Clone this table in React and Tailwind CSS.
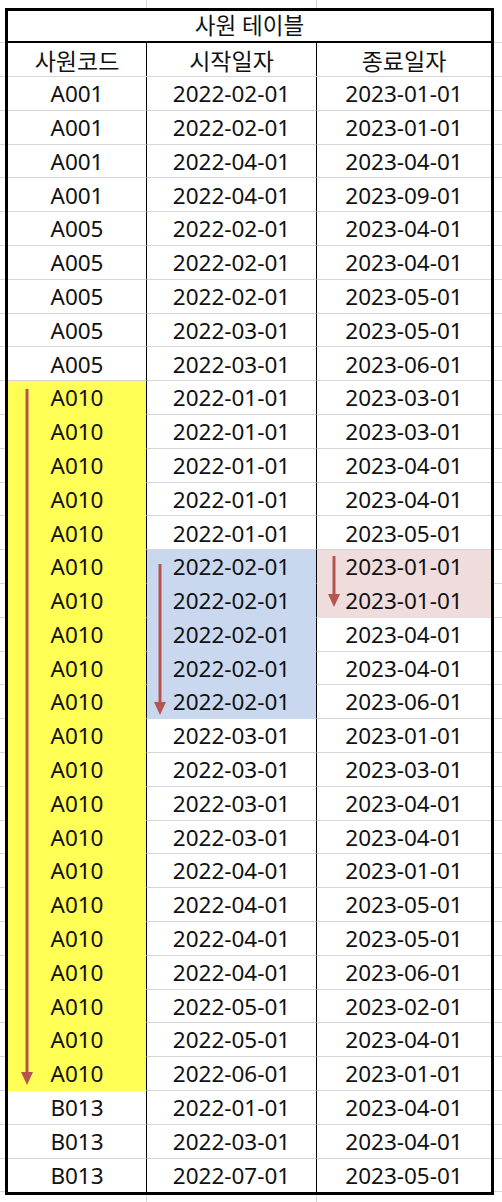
import React from 'react';

const rows = [
  ['A001', '2022-02-01', '2023-01-01'],
  ['A001', '2022-02-01', '2023-01-01'],
  ['A001', '2022-04-01', '2023-04-01'],
  ['A001', '2022-04-01', '2023-09-01'],
  ['A005', '2022-02-01', '2023-04-01'],
  ['A005', '2022-02-01', '2023-04-01'],
  ['A005', '2022-02-01', '2023-05-01'],
  ['A005', '2022-03-01', '2023-05-01'],
  ['A005', '2022-03-01', '2023-06-01'],
  ['A010', '2022-01-01', '2023-03-01'],
  ['A010', '2022-01-01', '2023-03-01'],
  ['A010', '2022-01-01', '2023-04-01'],
  ['A010', '2022-01-01', '2023-04-01'],
  ['A010', '2022-01-01', '2023-05-01'],
  ['A010', '2022-02-01', '2023-01-01'],
  ['A010', '2022-02-01', '2023-01-01'],
  ['A010', '2022-02-01', '2023-04-01'],
  ['A010', '2022-02-01', '2023-04-01'],
  ['A010', '2022-02-01', '2023-06-01'],
  ['A010', '2022-03-01', '2023-01-01'],
  ['A010', '2022-03-01', '2023-03-01'],
  ['A010', '2022-03-01', '2023-04-01'],
  ['A010', '2022-03-01', '2023-04-01'],
  ['A010', '2022-04-01', '2023-01-01'],
  ['A010', '2022-04-01', '2023-05-01'],
  ['A010', '2022-04-01', '2023-05-01'],
  ['A010', '2022-04-01', '2023-06-01'],
  ['A010', '2022-05-01', '2023-02-01'],
  ['A010', '2022-05-01', '2023-04-01'],
  ['A010', '2022-06-01', '2023-01-01'],
  ['B013', '2022-01-01', '2023-04-01'],
  ['B013', '2022-03-01', '2023-04-01'],
  ['B013', '2022-07-01', '2023-05-01'],
];

// fill per column, decided by row index
const fillFor = (col, i) => {
  if (col === 0 && i >= 9 && i <= 29) return 'yellow';
  if (col === 1 && i >= 14 && i <= 18) return 'blue';
  if (col === 2 && i >= 14 && i <= 15) return 'pink';
  return 'none';
};

const fillClass = {
  yellow: 'bg-[#ffff55] border-[#ffff55]',
  blue: 'bg-[#c9d8ee] border-[#c9d8ee]',
  pink: 'bg-[#efdcdc] border-[#efdcdc]',
  none: 'bg-white border-[#d6d6d6]',
};

const Cell = ({ children, fill, last, divider }) => (
  <div
    className={`h-[33.8px] pt-[2px] flex items-center justify-center ${last ? '' : 'border-b'} ${fillClass[fill]} ${
      divider ? 'border-r border-r-black' : ''
    }`}
  >
    {children}
  </div>
);

const Arrow = ({ x, top, bottom }) => (
  <svg
    className="absolute pointer-events-none"
    style={{ left: x - 8, top, width: 16, height: bottom - top }}
    viewBox={`0 0 16 ${bottom - top}`}
  >
    <line x1="8" y1="0" x2="8" y2={bottom - top - 10} stroke="#b85450" strokeWidth="3" />
    <polygon points={`2,${bottom - top - 13} 14,${bottom - top - 13} 8,${bottom - top}`} fill="#b85450" />
  </svg>
);

const Gutter = ({ width }) => (
  <div className="flex flex-col" style={{ width }}>
    <div className="h-[43px] border-b border-[#d6d6d6] shrink-0" />
    <div className="h-[34px] border-b border-[#d6d6d6] shrink-0" />
    {rows.map((_, i) => (
      <div key={i} className="h-[33.8px] border-b border-[#d6d6d6] shrink-0" />
    ))}
  </div>
);

export default function App() {
  return (
    <div
      className="relative w-[502px] h-[1202px] bg-white overflow-hidden text-[#111] text-[22.5px] leading-none"
      style={{ fontFamily: '"Noto Sans", "Noto Sans CJK KR", sans-serif' }}
    >
      <div className="flex">
        <Gutter width={5} />
        <div className="flex flex-col w-[489px]">
          <div className="flex h-[8px]">
            <div className="w-[142px] border-r border-[#d6d6d6]" />
            <div className="w-[170px] border-r border-[#d6d6d6]" />
          </div>
          <div className="border-[3px] border-black">
            <div className="h-[32px] pt-[1px] flex items-center justify-center border-b-2 border-black">
              사원 테이블
            </div>
            <div className="grid grid-cols-[139px_170px_1fr] h-[34px] border-b border-[#d6d6d6] text-[23px]">
              <div className="flex items-center justify-center pt-[3px] border-r border-black">사원코드</div>
              <div className="flex items-center justify-center pt-[3px] border-r border-black">시작일자</div>
              <div className="flex items-center justify-center pt-[3px]">종료일자</div>
            </div>
            <div className="grid grid-cols-[139px_170px_1fr]">
              {[0, 1, 2].map((col) => (
                <div key={col} className="flex flex-col">
                  {rows.map((r, i) => (
                    <Cell key={i} fill={fillFor(col, i)} last={i === rows.length - 1} divider={col < 2}>
                      {r[col]}
                    </Cell>
                  ))}
                </div>
              ))}
            </div>
          </div>
          <div className="flex h-[8px]">
            <div className="w-[142px] border-r border-[#d6d6d6]" />
            <div className="w-[170px] border-r border-[#d6d6d6]" />
          </div>
        </div>
        <Gutter width={8} />
      </div>

      <Arrow x={27} top={389} bottom={1085} />
      <Arrow x={160} top={564} bottom={715} />
      <Arrow x={334} top={556} bottom={607} />
    </div>
  );
}
